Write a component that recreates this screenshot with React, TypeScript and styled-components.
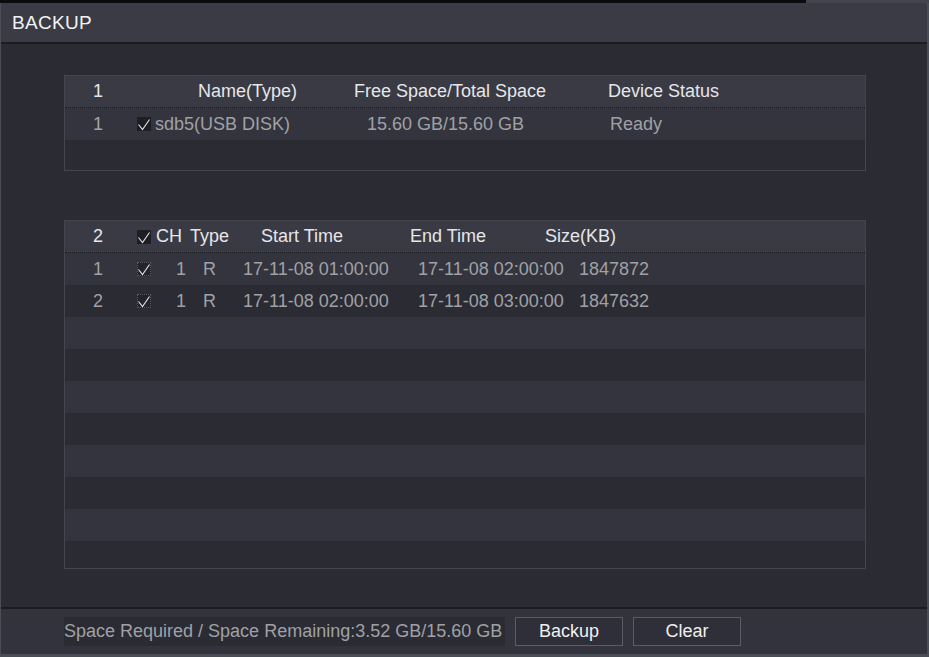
import React from "react";
import styled, { createGlobalStyle } from "styled-components";

const Global = createGlobalStyle`
  html, body { margin: 0; padding: 0; background: #0c0c0e; }
  body { width: 929px; height: 657px; overflow: hidden; font-family: "Liberation Sans", Arial, sans-serif; }
`;

const Page = styled.div`
  display: flex;
  flex-direction: column;
  width: 929px;
  height: 657px;
`;

const TopStrip = styled.div`
  display: flex;
  height: 3px;
`;

const StripPart = styled.div<{ $w?: number; $c: string }>`
  ${(p) => (p.$w ? `width: ${p.$w}px;` : "flex: 1;")}
  background: ${(p) => p.$c};
`;

const Dialog = styled.div`
  display: flex;
  flex-direction: column;
  border-left: 1px solid #4b4c56;
  border-right: 2px solid #4b4d57;
  border-bottom: 3px solid #4a4c56;
  flex: 1;
`;

const TitleBar = styled.div`
  height: 39px;
  background: #3a3b45;
  display: flex;
  align-items: center;
  padding-left: 11px;
  color: #f2f2f2;
  font-size: 19px;
  letter-spacing: 0.3px;
  border-bottom: 2px solid #1c1d22;
`;

const Body = styled.div`
  flex: 1;
  background: #2a2b33;
  padding: 31px 61px 0 63px;
  display: flex;
  flex-direction: column;
  gap: 49px;
`;

const Table = styled.div`
  border: 1px solid #44454e;
  display: flex;
  flex-direction: column;
`;

const HeaderRow = styled.div<{ $cols: string }>`
  display: grid;
  grid-template-columns: ${(p) => p.$cols};
  height: 31px;
  align-items: center;
  background: #393a44;
  border-bottom: 1px dotted #1a1b20;
  color: #e6e6e8;
  font-size: 18px;
`;

const RowsBox = styled.div<{ $h: number }>`
  height: ${(p) => p.$h}px;
  overflow: hidden;
`;

const Row = styled.div<{ $cols: string; $odd: boolean }>`
  display: grid;
  grid-template-columns: ${(p) => p.$cols};
  height: 32px;
  align-items: center;
  background: ${(p) => (p.$odd ? "#33343d" : "#2a2b33")};
  color: #a0a1a6;
  font-size: 18px;
`;

const Cell = styled.div<{ $pad?: number; $center?: boolean }>`
  padding-left: ${(p) => p.$pad ?? 0}px;
  white-space: nowrap;
  display: flex;
  align-items: center;
  justify-content: ${(p) => (p.$center ? "center" : "flex-start")};
  gap: 4px;
  overflow: visible;
`;

const Box = styled.span<{ $solid?: boolean }>`
  width: 14px;
  height: 14px;
  box-sizing: border-box;
  background: ${(p) => (p.$solid ? "#1d1e24" : "#24252c")};
  border: 1px ${(p) => (p.$solid ? "solid #1d1e24" : "dotted #5a5b63")};
  display: inline-flex;
  align-items: center;
  justify-content: center;
  flex: none;
  overflow: visible;
`;

const Check = ({ solid }: { solid?: boolean }) => (
  <Box $solid={solid}>
    <svg width="14" height="14" viewBox="0 0 14 14" style={{ overflow: "visible" }}>
      <polyline points="1.5,7.5 5.5,12.5 12.5,2.5" fill="none" stroke="#e4e4e6" strokeWidth="1.1" />
    </svg>
  </Box>
);

const Footer = styled.div`
  height: 45px;
  background: #32333d;
  border-top: 2px solid #1c1d22;
  display: flex;
  align-items: center;
  padding-left: 63px;
  gap: 10px;
`;

const Info = styled.div`
  width: 441px;
  height: 29px;
  background: #2a2b33;
  color: #a0a1a6;
  font-size: 18px;
  display: flex;
  align-items: center;
  white-space: nowrap;
  overflow: hidden;
`;

const Button = styled.button`
  width: 108px;
  height: 29px;
  box-sizing: border-box;
  border: 1px solid #5a5b64;
  background: #2e2f38;
  color: #f0f0f0;
  font-family: "Liberation Sans", Arial, sans-serif;
  font-size: 18px;
  padding: 0;
`;

const cols1 = "66px 223px 254px 1fr";
const cols2 = "66px 23px 33px 49px 170px 139px 1fr";

const files = [
  { n: "1", start: "17-11-08 01:00:00", end: "17-11-08 02:00:00", size: "1847872" },
  { n: "2", start: "17-11-08 02:00:00", end: "17-11-08 03:00:00", size: "1847632" },
];

export default function App() {
  return (
    <Page>
      <Global />
      <TopStrip>
        <StripPart $w={806} $c="#0b0b0d" />
        <StripPart $c="#43444d" />
      </TopStrip>
      <Dialog>
        <TitleBar>BACKUP</TitleBar>
        <Body>
          <Table>
            <HeaderRow $cols={cols1}>
              <Cell $center>1</Cell>
              <Cell $pad={67}>Name(Type)</Cell>
              <Cell>Free Space/Total Space</Cell>
              <Cell>Device Status</Cell>
            </HeaderRow>
            <RowsBox $h={62}>
              <Row $cols={cols1} $odd>
                <Cell $center>1</Cell>
                <Cell $pad={6}>
                  <Check solid />
                  <span>sdb5(USB DISK)</span>
                </Cell>
                <Cell $pad={13}>15.60 GB/15.60 GB</Cell>
                <Cell $pad={2}>Ready</Cell>
              </Row>
              <Row $cols={cols1} $odd={false} />
            </RowsBox>
          </Table>
          <Table>
            <HeaderRow $cols={cols2}>
              <Cell $center>2</Cell>
              <Cell $pad={6}>
                <Check solid />
              </Cell>
              <Cell $pad={2}>CH</Cell>
              <Cell $pad={3}>Type</Cell>
              <Cell $pad={25}>Start Time</Cell>
              <Cell $pad={4}>End Time</Cell>
              <Cell>Size(KB)</Cell>
            </HeaderRow>
            <RowsBox $h={315}>
              {Array.from({ length: 10 }).map((_, i) => {
                const f = files[i];
                return (
                  <Row key={i} $cols={cols2} $odd={i % 2 === 0}>
                    {f && (
                      <>
                        <Cell $center>{f.n}</Cell>
                        <Cell $pad={6}>
                          <Check />
                        </Cell>
                        <Cell $pad={22}>1</Cell>
                        <Cell $pad={16}>R</Cell>
                        <Cell $pad={7}>{f.start}</Cell>
                        <Cell $pad={12}>{f.end}</Cell>
                        <Cell $pad={34}>{f.size}</Cell>
                      </>
                    )}
                  </Row>
                );
              })}
            </RowsBox>
          </Table>
        </Body>
        <Footer>
          <Info>Space Required / Space Remaining:3.52 GB/15.60 GB</Info>
          <Button>Backup</Button>
          <Button>Clear</Button>
        </Footer>
      </Dialog>
    </Page>
  );
}
